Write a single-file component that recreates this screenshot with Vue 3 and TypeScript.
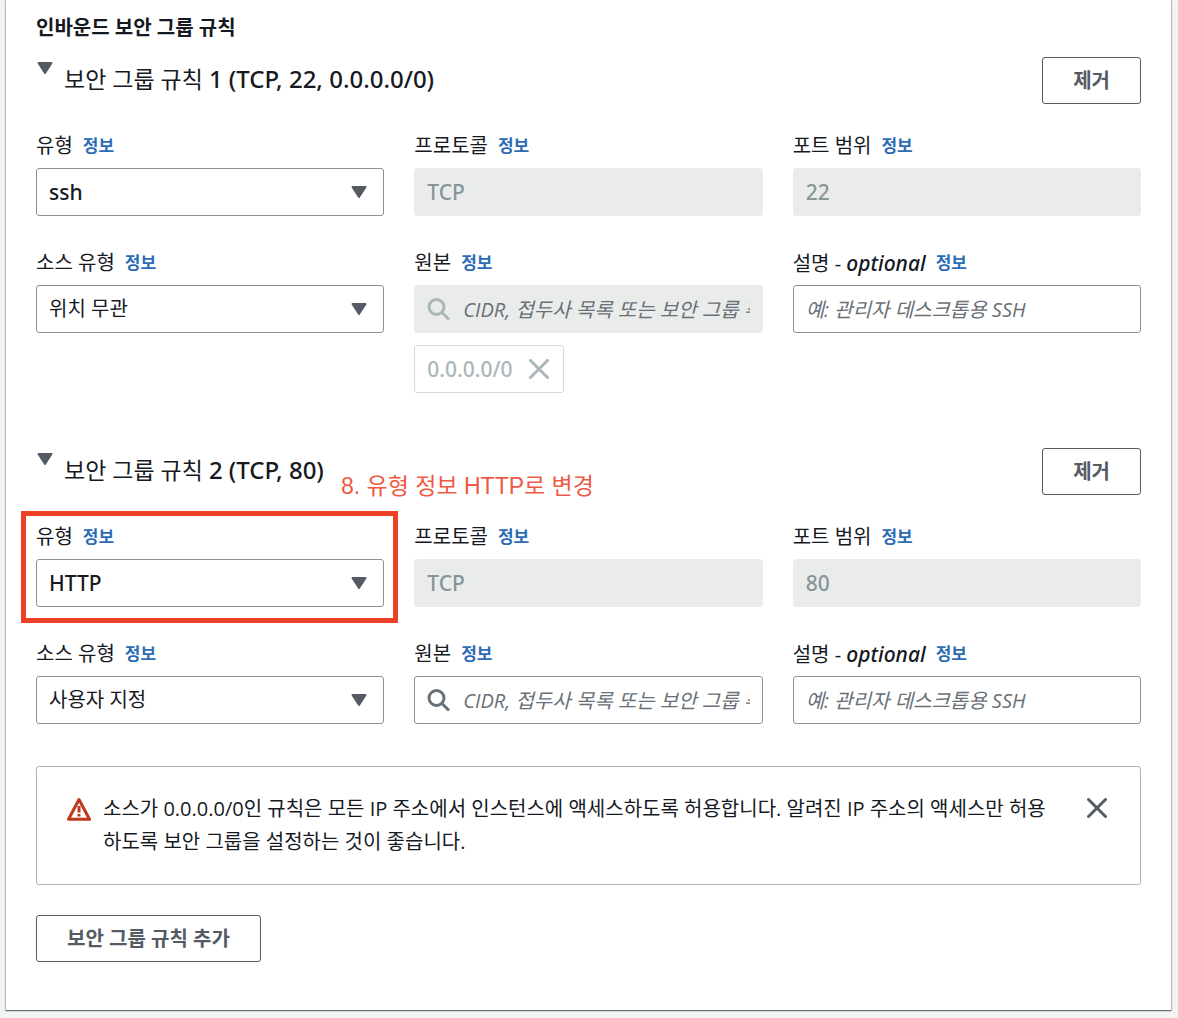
<script setup lang="ts">
import { ref } from 'vue'

interface Rule {
  id: number
  name: string
  detail: string
  type: string
  port: string
  sourceType: string
  sourceLocked: boolean
  cidrs: string[]
  note?: string
}

const rules = ref<Rule[]>([
  {
    id: 1,
    name: '보안 그룹 규칙',
    detail: '1 (TCP, 22, 0.0.0.0/0)',
    type: 'ssh',
    port: '22',
    sourceType: '위치 무관',
    sourceLocked: true,
    cidrs: ['0.0.0.0/0'],
  },
  {
    id: 2,
    name: '보안 그룹 규칙',
    detail: '2 (TCP, 80)',
    type: 'HTTP',
    port: '80',
    sourceType: '사용자 지정',
    sourceLocked: false,
    cidrs: [],
    note: '8. 유형 정보 HTTP로 변경',
  },
])

const types = ['ssh', 'HTTP']
const sourceTypes = ['위치 무관', '사용자 지정']
</script>

<template>
  <main class="panel">
    <h2 class="title">인바운드 보안 그룹 규칙</h2>

    <section v-for="rule in rules" :key="rule.id" class="rule">
      <header class="rule-head">
        <button type="button" class="toggle" aria-expanded="true">
          <svg class="caret" viewBox="0 0 16 13" aria-hidden="true">
            <path d="M1.5 1h13L8 11z" />
          </svg>
          <span class="rule-title">{{ rule.name }} <span class="detail">{{ rule.detail }}</span></span>
        </button>
        <button type="button" class="btn">제거</button>
        <p v-if="rule.note" class="note">{{ rule.note }}</p>
      </header>

      <div class="grid">
        <div class="field" :class="{ marked: rule.note }">
          <div class="label">
            <label :for="`type-${rule.id}`">유형</label>
            <a href="#">정보</a>
          </div>
          <div class="control code">
            <select :id="`type-${rule.id}`" v-model="rule.type">
              <option v-for="t in types" :key="t">{{ t }}</option>
            </select>
            <svg class="caret" viewBox="0 0 16 13" aria-hidden="true">
              <path d="M1.5 1h13L8 11z" />
            </svg>
          </div>
        </div>

        <div class="field">
          <div class="label">
            <label :for="`protocol-${rule.id}`">프로토콜</label>
            <a href="#">정보</a>
          </div>
          <div class="control code disabled">
            <input :id="`protocol-${rule.id}`" type="text" value="TCP" disabled />
          </div>
        </div>

        <div class="field">
          <div class="label">
            <label :for="`port-${rule.id}`">포트 범위</label>
            <a href="#">정보</a>
          </div>
          <div class="control code disabled">
            <input :id="`port-${rule.id}`" type="text" :value="rule.port" disabled />
          </div>
        </div>

        <div class="field">
          <div class="label">
            <label :for="`source-type-${rule.id}`">소스 유형</label>
            <a href="#">정보</a>
          </div>
          <div class="control">
            <select :id="`source-type-${rule.id}`" v-model="rule.sourceType">
              <option v-for="s in sourceTypes" :key="s">{{ s }}</option>
            </select>
            <svg class="caret" viewBox="0 0 16 13" aria-hidden="true">
              <path d="M1.5 1h13L8 11z" />
            </svg>
          </div>
        </div>

        <div class="field">
          <div class="label">
            <label :for="`source-${rule.id}`">원본</label>
            <a href="#">정보</a>
          </div>
          <div class="control" :class="{ disabled: rule.sourceLocked }">
            <svg class="lens" viewBox="0 0 24 24" aria-hidden="true">
              <circle cx="9.5" cy="10" r="7.5" />
              <path d="M15 15.5l7 7" />
            </svg>
            <input
              :id="`source-${rule.id}`"
              type="text"
              placeholder="CIDR, 접두사 목록 또는 보안 그룹 추가"
              :disabled="rule.sourceLocked"
            />
          </div>
          <div v-for="cidr in rule.cidrs" :key="cidr" class="token code">
            <span>{{ cidr }}</span>
            <button type="button" class="icon-btn" aria-label="제거" disabled>
              <svg class="cross" viewBox="0 0 20 20" aria-hidden="true">
                <path d="M1.5 1.5l17 17M18.5 1.5l-17 17" />
              </svg>
            </button>
          </div>
        </div>

        <div class="field">
          <div class="label">
            <label :for="`desc-${rule.id}`">설명 - <em class="code">optional</em></label>
            <a href="#">정보</a>
          </div>
          <div class="control">
            <input :id="`desc-${rule.id}`" type="text" placeholder="예: 관리자 데스크톱용 SSH" />
          </div>
        </div>
      </div>
    </section>

    <div class="alert" role="alert">
      <svg class="warning" viewBox="0 0 24 24" aria-hidden="true">
        <path class="warning-edge" d="M12 2.5L22.5 22.3h-21z" />
        <path class="warning-mark" d="M12 9v6.5M12 17v2.5" />
      </svg>
      <p>
        소스가 0.0.0.0/0인 규칙은 모든 IP 주소에서 인스턴스에 액세스하도록 허용합니다. 알려진 IP 주소의 액세스만 허용하도록 보안 그룹을 설정하는 것이 좋습니다.
      </p>
      <button type="button" class="icon-btn" aria-label="닫기">
        <svg class="cross" viewBox="0 0 20 20" aria-hidden="true">
          <path d="M1.5 1.5l17 17M18.5 1.5l-17 17" />
        </svg>
      </button>
    </div>

    <button type="button" class="btn">보안 그룹 규칙 추가</button>
  </main>
</template>

<style>
body {
  margin: 0;
  background: #f2f3f3;
}
</style>

<style scoped>
.panel {
  margin: 0 7px 8px 6px;
  padding: 11px 30px 48px;
  background: #fff;
  box-shadow: 0 1px 1px #687078, 0 0 1px 1px #c3c9c9;
  color: #16191f;
  font-family: "Open Sans", "Noto Sans CJK KR", sans-serif;
  font-size: 20px;
  line-height: 30px;
}

.panel *,
.panel {
  box-sizing: border-box;
}

.title {
  margin: 0 0 13px;
  font-size: 20px;
  line-height: 33px;
  font-weight: 700;
}

button,
input,
select {
  margin: 0;
  font: inherit;
  color: inherit;
}

.rule + .rule {
  margin-top: 55px;
}

.rule-head {
  position: relative;
  display: flex;
  justify-content: space-between;
  align-items: flex-start;
  margin-bottom: 27px;
}

.toggle {
  display: flex;
  align-items: flex-start;
  gap: 11px;
  padding: 5px 0 0 1px;
  border: 0;
  background: none;
  text-align: left;
}

.rule-title {
  font-size: 23px;
  line-height: 33px;
}

.detail {
  font-family: "Noto Sans", sans-serif;
  font-size: 24px;
  font-weight: 500;
}

.code {
  font-family: "Noto Sans", sans-serif;
  font-size: 21px;
  font-weight: 500;
}

.caret {
  flex: none;
  width: 16px;
  height: 13px;
  fill: #545b64;
  stroke: #545b64;
  stroke-width: 2;
  stroke-linejoin: round;
}

.btn {
  height: 47px;
  padding: 0 30px;
  border: 1px solid #545b64;
  border-radius: 3px;
  background: #fff;
  color: #545b64;
  font-weight: 700;
}

.note {
  position: absolute;
  top: 22px;
  left: 305px;
  margin: 0;
  color: #ee5a45;
  font-family: "Liberation Sans", "Noto Sans CJK KR", sans-serif;
  font-size: 23px;
  line-height: 33px;
}

.grid {
  display: grid;
  grid-template-columns: repeat(3, minmax(0, 1fr));
  column-gap: 30px;
  row-gap: 32px;
  align-items: start;
}

.field {
  position: relative;
}

.marked::after {
  content: "";
  position: absolute;
  inset: -11px -14px -16px -15px;
  border: 5px solid #ec4127;
  pointer-events: none;
}

.label {
  display: flex;
  align-items: center;
  gap: 10px;
  height: 30px;
  margin-bottom: 7px;
}

.label a {
  color: #2b6cb5;
  font-size: 17px;
  font-weight: 700;
  text-decoration: none;
}

.control {
  display: flex;
  align-items: center;
  height: 48px;
  padding: 0 12px;
  border: 1px solid #879596;
  border-radius: 3px;
  background: #fff;
}

.control input,
.control select {
  flex: 1;
  min-width: 0;
  height: 46px;
  padding: 0;
  border: 0;
  outline: 0;
  background: none;
  appearance: none;
}

.control .caret {
  margin: 0 4px 0 -20px;
  pointer-events: none;
}

.control input::placeholder {
  color: #687078;
  font-style: italic;
  opacity: 1;
}

.disabled {
  border-color: #eaeded;
  background: #eaeceb;
  color: #879596;
}

.lens {
  flex: none;
  width: 24px;
  height: 24px;
  margin-right: 12px;
  fill: none;
  stroke: #687078;
  stroke-width: 3;
}

.disabled .lens {
  stroke: #aab7b8;
}

.token {
  display: flex;
  align-items: center;
  gap: 16px;
  width: fit-content;
  height: 48px;
  margin-top: 12px;
  padding: 0 14px 0 12px;
  border: 1px solid #d5dbdb;
  border-radius: 3px;
  color: #aab7b8;
}

.icon-btn {
  display: flex;
  padding: 0;
  border: 0;
  background: none;
  color: #545b64;
}

.token .icon-btn {
  color: #aab7b8;
}

.cross {
  width: 20px;
  height: 20px;
  fill: none;
  stroke: currentColor;
  stroke-width: 3;
  stroke-linecap: round;
}

.alert {
  display: flex;
  align-items: flex-start;
  margin: 42px 0 30px;
  padding: 25px 33px 26px 30px;
  border: 1px solid #aab7b8;
  border-radius: 3px;
}

.alert p {
  flex: 1;
  margin: 0 30px 0 12px;
  line-height: 33px;
}

.alert .icon-btn {
  margin-top: 6px;
}

.warning {
  flex: none;
  width: 24px;
  height: 24px;
  margin-top: 5px;
  fill: none;
  stroke: #c0391d;
}

.warning-edge {
  stroke-width: 3;
  stroke-linejoin: round;
}

.warning-mark {
  stroke-width: 3;
}
</style>
